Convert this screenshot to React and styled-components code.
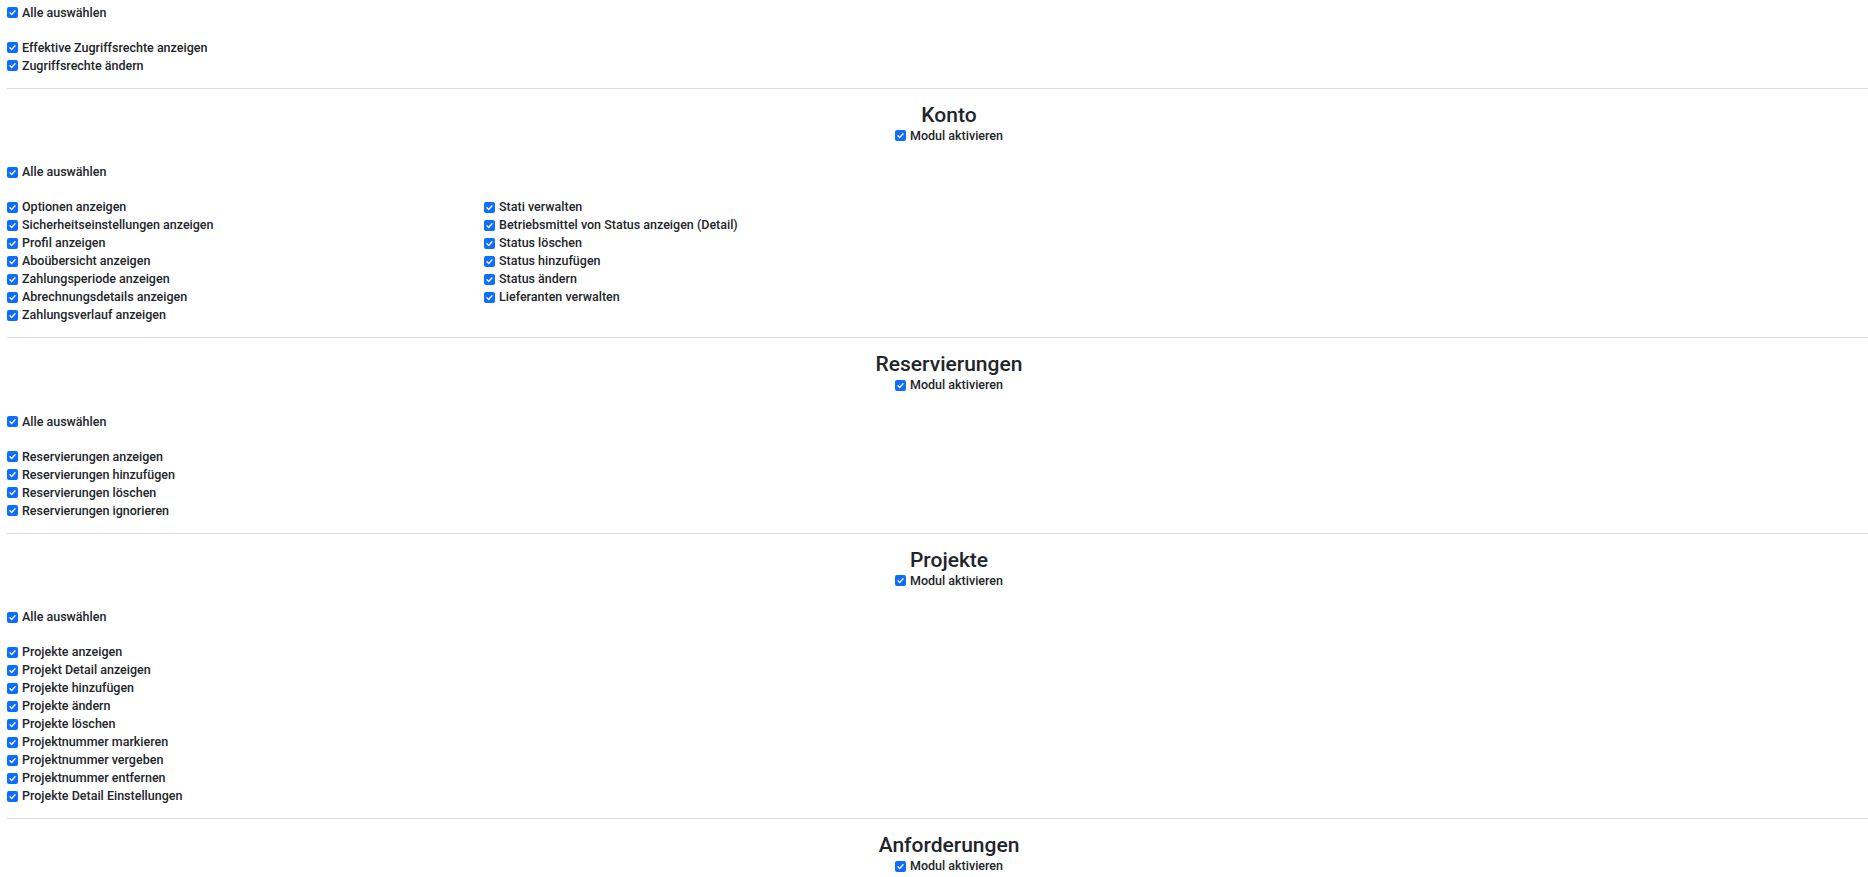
import React from 'react';
import styled, { createGlobalStyle } from 'styled-components';

const GlobalStyle = createGlobalStyle`
  html, body {
    margin: 0;
    padding: 0;
    background: #fff;
    overflow: hidden;
  }
  body {
    font-family: Roboto, "Liberation Sans", Arial, sans-serif;
    color: #212529;
  }
`

const Page = styled.div`
  width: 1884px;
  margin-left: 7px;
  padding-top: 2px;
`

const Section = styled.section`
  display: flex;
  flex-direction: column;
`

const Divider = styled.hr`
  border: 0;
  border-top: 1px solid #dcdcdc;
  margin: 13px 0 14px;
`

const Heading = styled.h2`
  margin: 0;
  font-size: 21px;
  line-height: 24px;
  font-weight: 500;
  text-align: center;
  color: #212529;
`

const Center = styled.div`
  display: flex;
  justify-content: center;
  margin-bottom: 17px;
`

const SelectAll = styled.div`
  margin-bottom: 17px;
`

const Columns = styled.div`
  display: grid;
  grid-template-columns: ${props => props.$two ? '477px 1fr' : '1fr'};
  align-items: start;
`

const List = styled.div`
  display: flex;
  flex-direction: column;
`

const Label = styled.label`
  display: inline-flex;
  align-items: center;
  gap: 4px;
  font-size: 12.5px;
  line-height: 18px;
  font-weight: 500;
  color: #212529;
  white-space: nowrap;
  cursor: pointer;
`

const Box = styled.span`
  width: 11px;
  height: 11px;
  border-radius: 2px;
  background: #0d6efd;
  display: inline-flex;
  align-items: center;
  justify-content: center;
  flex: none;
`

function Check({ children }) {
    return (
        <Label>
            <Box>
                <svg width="9" height="9" viewBox="0 0 16 16" fill="none">
                    <path d="M3.5 8.5l3 3 6-6.5" stroke="#fff" strokeWidth="2.4" strokeLinecap="round" strokeLinejoin="round" />
                </svg>
            </Box>
            {children}
        </Label>
    )
}

const sections = [
    {
        title: 'Konto',
        columns: [
            ['Optionen anzeigen', 'Sicherheitseinstellungen anzeigen', 'Profil anzeigen', 'Aboübersicht anzeigen', 'Zahlungsperiode anzeigen', 'Abrechnungsdetails anzeigen', 'Zahlungsverlauf anzeigen'],
            ['Stati verwalten', 'Betriebsmittel von Status anzeigen (Detail)', 'Status löschen', 'Status hinzufügen', 'Status ändern', 'Lieferanten verwalten'],
        ],
    },
    {
        title: 'Reservierungen',
        columns: [
            ['Reservierungen anzeigen', 'Reservierungen hinzufügen', 'Reservierungen löschen', 'Reservierungen ignorieren'],
        ],
    },
    {
        title: 'Projekte',
        columns: [
            ['Projekte anzeigen', 'Projekt Detail anzeigen', 'Projekte hinzufügen', 'Projekte ändern', 'Projekte löschen', 'Projektnummer markieren', 'Projektnummer vergeben', 'Projektnummer entfernen', 'Projekte Detail Einstellungen'],
        ],
    },
    {
        // rest of this module is below the fold
        title: 'Anforderungen',
        columns: [],
    },
]

function Permissions({ columns }) {
    if (!columns.length) return null
    return (
        <>
            <SelectAll>
                <Check>Alle auswählen</Check>
            </SelectAll>
            <Columns $two={columns.length > 1}>
                {columns.map((col, i) => (
                    <List key={i}>
                        {col.map(item => <Check key={item}>{item}</Check>)}
                    </List>
                ))}
            </Columns>
        </>
    )
}

export default function App() {
    return (
        <>
            <GlobalStyle />
            <Page>
                <Section>
                    <Permissions columns={[['Effektive Zugriffsrechte anzeigen', 'Zugriffsrechte ändern']]} />
                </Section>
                {sections.map(s => (
                    <Section key={s.title}>
                        <Divider />
                        <Heading>{s.title}</Heading>
                        <Center>
                            <Check>Modul aktivieren</Check>
                        </Center>
                        <Permissions columns={s.columns} />
                    </Section>
                ))}
            </Page>
        </>
    )
}
